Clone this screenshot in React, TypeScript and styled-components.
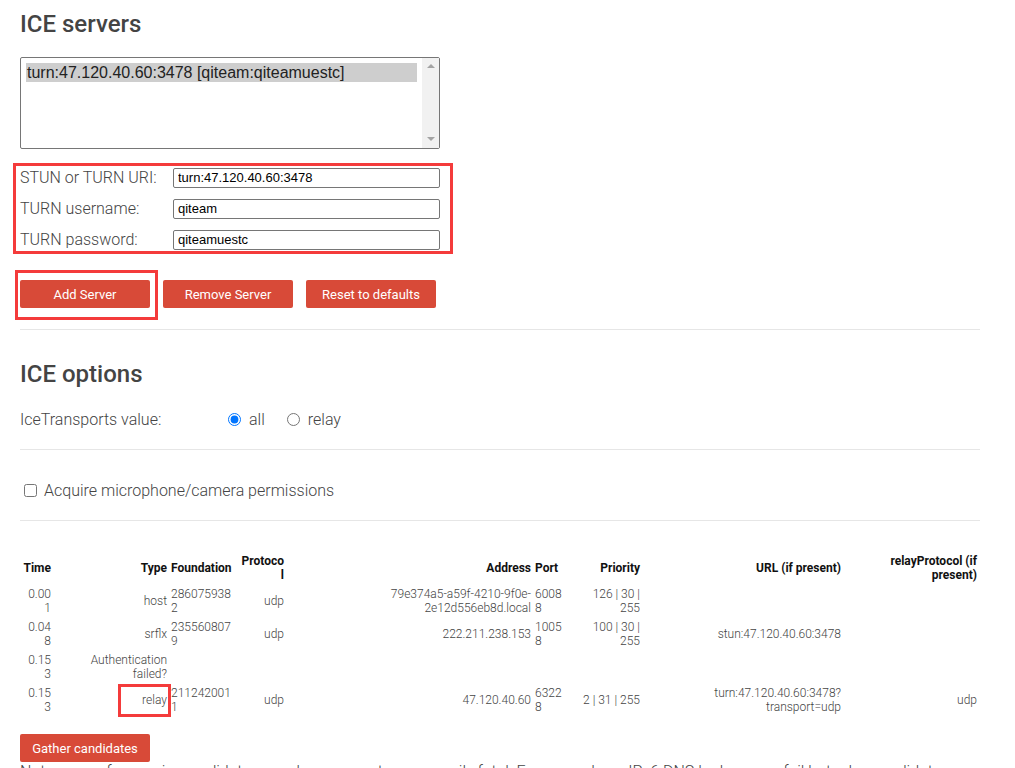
import React from 'react';
import styled, { createGlobalStyle } from 'styled-components';

const Global = createGlobalStyle`
  html, body { margin: 0; padding: 0; background: #fff; }
  body {
    font-family: Roboto, "Noto Sans", sans-serif;
    font-weight: 300;
    color: #444;
  }
`;

const Page = styled.main`
  width: 960px;
  padding: 10px 0 0 20px;
`;

const Heading = styled.h2<{ $mt?: number }>`
  margin: ${(p) => p.$mt ?? 0}px 0 0 0;
  font-size: 24px;
  line-height: 28px;
  font-weight: 500;
  color: #444;
`;

const ListBox = styled.div`
  margin-top: 19px;
  width: 420px;
  height: 92px;
  box-sizing: border-box;
  border: 1px solid #767676;
  border-radius: 2px;
  display: flex;
`;

const Options = styled.div`
  flex: 1;
  padding: 5px 5px 0 5px;
`;

const Option = styled.div<{ $selected?: boolean }>`
  background: ${(p) => (p.$selected ? '#cecece' : 'transparent')};
  font: 16px/19px "Liberation Sans", Arial, sans-serif;
  color: #222;
  padding-left: 1px;
  white-space: nowrap;
`;

const ScrollTrack = styled.div`
  width: 17px;
  background: #f1f1f1;
  display: flex;
  flex-direction: column;
  justify-content: space-between;
  align-items: center;
  padding: 6px 0 7px;
`;

const Arrow = styled.span<{ $down?: boolean }>`
  width: 0;
  height: 0;
  border-left: 4px solid transparent;
  border-right: 4px solid transparent;
  ${(p) =>
    p.$down
      ? 'border-top: 4px solid #a3a3a3;'
      : 'border-bottom: 4px solid #a3a3a3;'}
`;

const Form = styled.div`
  position: relative;
  margin-top: 13px;
  width: 420px;
`;

const FormRow = styled.div`
  display: grid;
  grid-template-columns: 153px 267px;
  align-items: center;
  height: 31px;
`;

const FieldLabel = styled.label`
  font-size: 16px;
  color: #444;
`;

const TextInput = styled.input`
  box-sizing: border-box;
  width: 267px;
  height: 20px;
  margin: 0;
  border: 1px solid #767676;
  border-radius: 2px;
  padding: 0 4px;
  font: 13px "Liberation Sans", Arial, sans-serif;
  color: #000;
  background: #fff;
`;

const ButtonRow = styled.div<{ $mt?: number }>`
  display: flex;
  gap: 13px;
  margin-top: ${(p) => p.$mt ?? 25}px;
`;

const ButtonWrap = styled.span`
  position: relative;
  display: inline-flex;
`;

const Button = styled.button`
  width: 130px;
  height: 28px;
  padding: 0;
  border: none;
  border-radius: 2px;
  background: #d84a38;
  color: #fff;
  font-family: Roboto, "Noto Sans", sans-serif;
  font-size: 13px;
  font-weight: 400;
`;

const Callout = styled.span<{ $t: number; $r: number; $b: number; $l: number }>`
  position: absolute;
  top: ${(p) => p.$t}px;
  right: ${(p) => p.$r}px;
  bottom: ${(p) => p.$b}px;
  left: ${(p) => p.$l}px;
  border: 3px solid #f43b3b;
  pointer-events: none;
`;

const Divider = styled.hr<{ $mt: number }>`
  margin: ${(p) => p.$mt}px 0 0 0;
  width: 960px;
  border: 0;
  border-top: 1px solid #e6e6e6;
  height: 0;
`;

const OptionLine = styled.div<{ $mt: number }>`
  margin-top: ${(p) => p.$mt}px;
  display: flex;
  align-items: center;
  height: 20px;
  font-size: 16px;
  color: #444;
`;

const OptionLabel = styled.span`
  width: 208px;
`;

const Choice = styled.label`
  display: inline-flex;
  align-items: center;
  gap: 8px;
  margin-right: 22px;
`;

const Radio = styled.input`
  width: 13px;
  height: 13px;
  margin: 0;
`;

const CheckBox = styled.input`
  width: 13px;
  height: 13px;
  margin: 0 7px 0 4px;
`;

const Candidates = styled.table`
  margin-top: 29px;
  width: 960px;
  table-layout: fixed;
  border-spacing: 2px;
  font-size: 12px;

  th, td {
    padding: 1.5px 1px;
    text-align: right;
    vertical-align: middle;
    overflow-wrap: anywhere;
    line-height: normal;
  }
  th {
    font-weight: 700;
    color: #111;
  }
  td {
    font-weight: 300;
    color: #444;
  }
  .left {
    text-align: left;
  }
`;

const Tagged = styled.span`
  position: relative;
  display: inline-block;
`;

const Note = styled.p`
  margin: 0;
  font-size: 16px;
  color: #444;
`;

const colWidths = [30, 114, 67, 46, 245, 35, 70, 199, 134];

type Row = {
  time: string;
  type: string;
  foundation: string;
  protocol: string;
  address: string;
  port: string;
  priority: string;
  url: string;
  relay: string;
  tagged?: boolean;
};

const rows: Row[] = [
  {
    time: '0.001',
    type: 'host',
    foundation: '2860759382',
    protocol: 'udp',
    address: '79e374a5-a59f-4210-9f0e-2e12d556eb8d.local',
    port: '60088',
    priority: '126 | 30 | 255',
    url: '',
    relay: '',
  },
  {
    time: '0.048',
    type: 'srflx',
    foundation: '2355608079',
    protocol: 'udp',
    address: '222.211.238.153',
    port: '10058',
    priority: '100 | 30 | 255',
    url: 'stun:47.120.40.60:3478',
    relay: '',
  },
  {
    time: '0.153',
    type: 'Authentication failed?',
    foundation: '',
    protocol: '',
    address: '',
    port: '',
    priority: '',
    url: '',
    relay: '',
  },
  {
    time: '0.153',
    type: 'relay',
    foundation: '2112420011',
    protocol: 'udp',
    address: '47.120.40.60',
    port: '63228',
    priority: '2 | 31 | 255',
    url: 'turn:47.120.40.60:3478?transport=udp',
    relay: 'udp',
    tagged: true,
  },
];

export default function App() {
  return (
    <>
      <Global />
      <Page>
        <Heading>ICE servers</Heading>
        <ListBox>
          <Options>
            <Option $selected>turn:47.120.40.60:3478 [qiteam:qiteamuestc]</Option>
          </Options>
          <ScrollTrack>
            <Arrow />
            <Arrow $down />
          </ScrollTrack>
        </ListBox>

        <Form>
          <FormRow>
            <FieldLabel>STUN or TURN URI:</FieldLabel>
            <TextInput defaultValue="turn:47.120.40.60:3478" />
          </FormRow>
          <FormRow>
            <FieldLabel>TURN username:</FieldLabel>
            <TextInput defaultValue="qiteam" />
          </FormRow>
          <FormRow>
            <FieldLabel>TURN password:</FieldLabel>
            <TextInput defaultValue="qiteamuestc" />
          </FormRow>
          <Callout $t={1} $r={-13} $b={1} $l={-7} />
        </Form>

        <ButtonRow>
          <ButtonWrap>
            <Button>Add Server</Button>
            <Callout $t={-10} $r={-8} $b={-12} $l={-5} />
          </ButtonWrap>
          <Button>Remove Server</Button>
          <Button>Reset to defaults</Button>
        </ButtonRow>

        <Divider $mt={21} />

        <Heading $mt={30}>ICE options</Heading>
        <OptionLine $mt={21}>
          <OptionLabel>IceTransports value:</OptionLabel>
          <Choice>
            <Radio type="radio" name="transports" defaultChecked />
            all
          </Choice>
          <Choice>
            <Radio type="radio" name="transports" />
            relay
          </Choice>
        </OptionLine>

        <Divider $mt={20} />

        <OptionLine $mt={30}>
          <CheckBox type="checkbox" />
          Acquire microphone/camera permissions
        </OptionLine>

        <Divider $mt={20} />

        <Candidates>
          <colgroup>
            {colWidths.map((w, i) => (
              <col key={i} style={{ width: w }} />
            ))}
          </colgroup>
          <thead>
            <tr>
              <th>Time</th>
              <th>Type</th>
              <th className="left">Foundation</th>
              <th>Protocol</th>
              <th>Address</th>
              <th className="left">Port</th>
              <th>Priority</th>
              <th>URL (if present)</th>
              <th>relayProtocol (if present)</th>
            </tr>
          </thead>
          <tbody>
            {rows.map((r, i) => (
              <tr key={i}>
                <td>{r.time}</td>
                <td>
                  {r.tagged ? (
                    <Tagged>
                      {r.type}
                      <Callout $t={-9} $r={-4} $b={-10} $l={-24} />
                    </Tagged>
                  ) : (
                    r.type
                  )}
                </td>
                <td className="left">{r.foundation}</td>
                <td>{r.protocol}</td>
                <td>{r.address}</td>
                <td className="left">{r.port}</td>
                <td>{r.priority}</td>
                <td>{r.url}</td>
                <td>{r.relay}</td>
              </tr>
            ))}
          </tbody>
        </Candidates>

        <ButtonRow $mt={17}>
          <Button>Gather candidates</Button>
        </ButtonRow>
        <Note>
          Note: errors from onicecandidateerror above are not neccessarily fatal. For example an IPv6 DNS
          lookup may fail but relay candidates can still be gathered via IPv4.
        </Note>
      </Page>
    </>
  );
}
